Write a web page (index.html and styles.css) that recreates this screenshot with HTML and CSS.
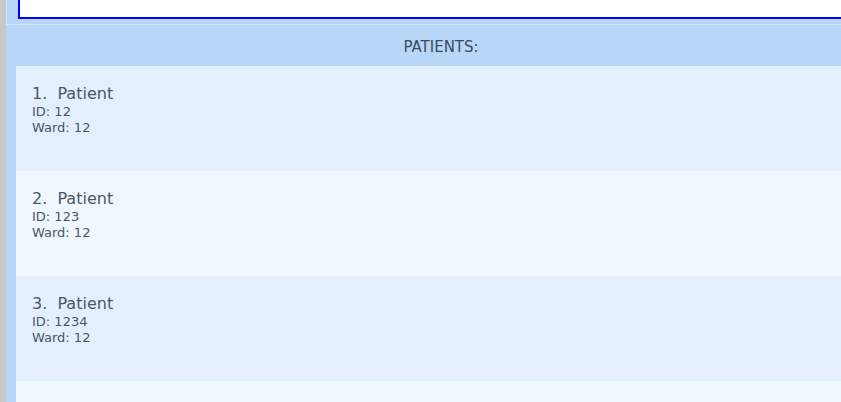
FILE: index.html
```html
<!DOCTYPE html>
<html>
<head>
<meta charset="utf-8">
<link rel="stylesheet" href="styles.css">
</head>
<body>
<div class="app">
  <div class="side"></div>
  <div class="main">
    <div class="top">
      <div class="command"></div>
    </div>
    <div class="header">PATIENTS:</div>
    <div class="list">
      <div class="row odd">
        <div class="name">1.&nbsp; Patient</div>
        <div class="meta">ID: 12</div>
        <div class="meta">Ward: 12</div>
      </div>
      <div class="row even">
        <div class="name">2.&nbsp; Patient</div>
        <div class="meta">ID: 123</div>
        <div class="meta">Ward: 12</div>
      </div>
      <div class="row odd">
        <div class="name">3.&nbsp; Patient</div>
        <div class="meta">ID: 1234</div>
        <div class="meta">Ward: 12</div>
      </div>
      <div class="row even"></div>
    </div>
  </div>
</div>
</body>
</html>
```
FILE: styles.css
```css
html, body {
  margin: 0;
  padding: 0;
  width: 841px;
  height: 402px;
  overflow: hidden;
  background: #b8d6f8;
  font-family: "DejaVu Sans", sans-serif;
}
.app {
  display: flex;
  height: 402px;
  overflow: hidden;
}
.side {
  width: 6px;
  flex: none;
  background: #c8c8c8;
}
.main {
  flex: 1;
  display: flex;
  flex-direction: column;
  min-width: 0;
  overflow: hidden;
}
.top {
  height: 24px;
  flex: none;
  border-left: 1px solid #d4e5fa;
  border-bottom: 1px solid #d4e5fa;
  padding-left: 11px;
}
.command {
  height: 17px;
  background: #ffffff;
  border-left: 2px solid #0000ff;
  border-bottom: 2px solid #0000ff;
  margin-right: -10px;
}
.header {
  height: 41px;
  box-sizing: border-box;
  padding-top: 2px;
  flex: none;
  display: flex;
  align-items: center;
  justify-content: center;
  padding-left: 35px;
  font-size: 15px;
  color: #3c4a5a;
}
.list {
  margin-left: 10px;
  display: flex;
  flex-direction: column;
}
.row {
  height: 105px;
  flex: none;
  box-sizing: border-box;
  padding: 19px 16px 0;
  color: #4a5668;
}
.odd { background: #e3effd; }
.even { background: #f0f7ff; }
.name {
  font-size: 16px;
  line-height: 18px;
  margin-bottom: 1px;
}
.meta {
  font-size: 13px;
  line-height: 16px;
}
```
